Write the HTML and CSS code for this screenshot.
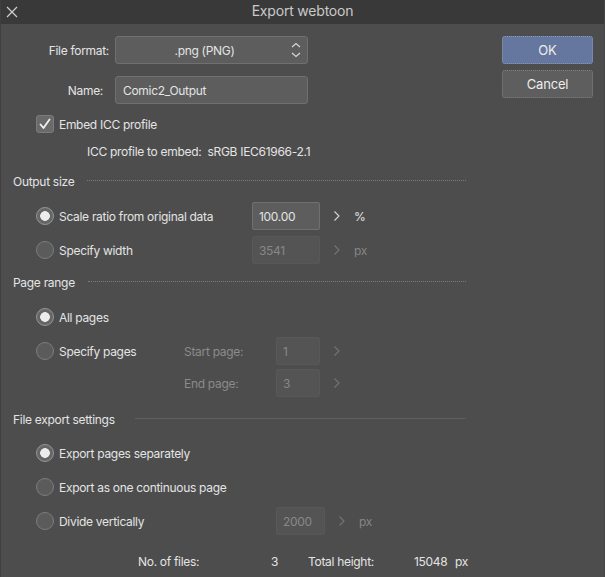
FILE: index.html
```html
<!DOCTYPE html>
<html lang="en">
<head>
<meta charset="utf-8">
<title>Export webtoon</title>
<link rel="stylesheet" href="styles.css">
</head>
<body>
<div class="window">
  <div class="titlebar">
    <svg class="close" width="12" height="12" viewBox="0 0 12 12"><path d="M1 1 L11 11 M11 1 L1 11" stroke="#cfcfcf" stroke-width="1.2" fill="none"/></svg>
    <div class="title">Export webtoon</div>
  </div>
  <div class="body">
    <div class="form">
      <div class="row field">
        <label class="flabel">File format:</label>
        <div class="select">.png (PNG)
          <svg class="updown" width="10" height="16" viewBox="0 0 10 16"><path d="M1 5 L5 1.5 L9 5 M1 11 L5 14.5 L9 11" stroke="#d8d8d8" stroke-width="1.1" fill="none"/></svg>
        </div>
      </div>
      <div class="row field name-row">
        <label class="flabel name">Name:</label>
        <div class="textbox">Comic2_Output</div>
      </div>
      <div class="row check-row">
        <span class="checkbox"><svg width="14" height="14" viewBox="0 0 14 14"><path d="M2.5 7.5 L5.5 11 L11.5 2.5" stroke="#f2f2f2" stroke-width="1.8" fill="none" stroke-linecap="round" stroke-linejoin="round"/></svg></span>
        <span>Embed ICC profile</span>
      </div>
      <div class="row icc-row">ICC profile to embed:&nbsp; sRGB IEC61966-2.1</div>

      <div class="section-head"><span>Output size</span><i class="rule dotted"></i></div>
      <div class="row opt">
        <span class="radio on"></span><span class="olabel">Scale ratio from original data</span>
        <div class="num w68">100.00</div>
        <svg class="chev" width="8" height="12" viewBox="0 0 8 12"><path d="M1.5 1.5 L6 6 L1.5 10.5" stroke="#d8d8d8" stroke-width="1.1" fill="none"/></svg>
        <span class="unit">%</span>
      </div>
      <div class="row opt">
        <span class="radio"></span><span class="olabel">Specify width</span>
        <div class="num w68 off">3541</div>
        <svg class="chev" width="8" height="12" viewBox="0 0 8 12"><path d="M1.5 1.5 L6 6 L1.5 10.5" stroke="#757575" stroke-width="1.1" fill="none"/></svg>
        <span class="unit off">px</span>
      </div>

      <div class="section-head pr"><span>Page range</span><i class="rule dotted"></i></div>
      <div class="row opt">
        <span class="radio on"></span><span class="olabel">All pages</span>
      </div>
      <div class="row opt">
        <span class="radio"></span><span class="olabel short">Specify pages</span>
        <span class="plabel">Start page:</span>
        <div class="num w44 off">1</div>
        <svg class="chev" width="8" height="12" viewBox="0 0 8 12"><path d="M1.5 1.5 L6 6 L1.5 10.5" stroke="#757575" stroke-width="1.1" fill="none"/></svg>
      </div>
      <div class="row opt tight">
        <span class="radio ghost"></span><span class="olabel short"></span>
        <span class="plabel">End page:</span>
        <div class="num w44 off">3</div>
        <svg class="chev" width="8" height="12" viewBox="0 0 8 12"><path d="M1.5 1.5 L6 6 L1.5 10.5" stroke="#757575" stroke-width="1.1" fill="none"/></svg>
      </div>

      <div class="section-head wide"><span>File export settings</span><i class="rule solid"></i></div>
      <div class="row opt">
        <span class="radio on"></span><span class="olabel">Export pages separately</span>
      </div>
      <div class="row opt">
        <span class="radio"></span><span class="olabel">Export as one continuous page</span>
      </div>
      <div class="row opt">
        <span class="radio"></span><span class="olabel long">Divide vertically</span>
        <div class="num w49 off">2000</div>
        <svg class="chev" width="8" height="12" viewBox="0 0 8 12"><path d="M1.5 1.5 L6 6 L1.5 10.5" stroke="#757575" stroke-width="1.1" fill="none"/></svg>
        <span class="unit off">px</span>
      </div>
      <div class="row summary">
        <span class="s1">No. of files:</span><span class="s2">3</span><span class="s3">Total height:</span><span class="s4">15048</span><span class="s5">px</span>
      </div>
    </div>
    <div class="actions">
      <button class="btn ok">OK</button>
      <button class="btn cancel">Cancel</button>
    </div>
  </div>
</div>
</body>
</html>
```

FILE: styles.css
```css
html, body {
  margin: 0;
  padding: 0;
  background: #4d4d4d;
}
body {
  font-family: "Inter", "Liberation Sans", sans-serif;
  font-size: 12px;
  letter-spacing: -0.3px;
  color: #e4e4e4;
}
.window {
  width: 605px;
  height: 577px;
  background: #4d4d4d;
  box-sizing: border-box;
  border-left: 1px solid #3f3f3f;
  border-right: 1px solid #454545;
  overflow: hidden;
}
.titlebar {
  height: 24px;
  box-sizing: border-box;
  padding-bottom: 3px;
  background: #393939;
  display: flex;
  align-items: center;
  justify-content: center;
  position: relative;
  margin-left: -1px;
  margin-right: -1px;
}
.close {
  position: absolute;
  left: 6px;
  top: 6px;
}
.title {
  font-size: 14px;
  color: #c9c9c9;
  letter-spacing: -0.2px;
}
.body {
  display: flex;
  padding-top: 12px;
}
.form {
  width: 465px;
  flex: none;
  display: flex;
  flex-direction: column;
  gap: 6px;
}
.row {
  height: 28px;
  display: flex;
  align-items: center;
}
.field {
  gap: 6px;
}
.flabel {
  width: 108px;
  text-align: right;
}
.flabel.name {
  padding-right: 6px;
  box-sizing: border-box;
}
.name-row { margin-top: 6px; }
.select, .textbox {
  width: 193px;
  height: 28px;
  box-sizing: border-box;
  border: 1px solid #707070;
  border-radius: 3px;
  background: #5d5d5d;
  display: flex;
  align-items: center;
  position: relative;
}
.select {
  justify-content: center;
  padding-right: 14px;
}
.textbox {
  padding-left: 7px;
}
.updown {
  position: absolute;
  right: 6px;
  top: 5px;
}
.check-row {
  height: 20px;
  padding-left: 35px;
  gap: 5px;
  margin-top: 4px;
}
.checkbox {
  width: 18px;
  height: 18px;
  box-sizing: border-box;
  border: 1px solid #7c7c7c;
  border-radius: 3px;
  background: #6a6a6a;
  display: flex;
  align-items: center;
  justify-content: center;
}
.icc-row {
  height: 20px;
  padding-left: 86px;
  margin-top: 1px;
}
.section-head {
  height: 20px;
  display: flex;
  align-items: center;
  gap: 13px;
  padding-left: 12px;
  margin-top: 4px;
}
.section-head.pr { margin-top: 2px; }
.section-head.wide { gap: 20px; margin-top: 6px; }
.section-head + .row { margin-top: 5px; }
.section-head.wide + .row { margin-top: 4px; }
.rule {
  flex: 1;
  height: 0;
  margin-top: -1px;
}
.rule.dotted { border-top: 1px dotted #7a7a7a; }
.rule.solid { border-top: 1px solid #5f5f5f; }
.opt {
  padding-left: 35px;
}
.opt.tight { margin-top: -2px; }
.radio {
  width: 18px;
  height: 18px;
  box-sizing: border-box;
  border-radius: 50%;
  border: 1px solid #7d7d7d;
  background: #5b5b5b;
  flex: none;
}
.radio.on {
  border: 1px solid #969696;
  background: radial-gradient(circle, #ececec 0 4.5px, #666 5.2px);
}
.radio.ghost { visibility: hidden; }
.olabel {
  margin-left: 5px;
  width: 193px;
  white-space: nowrap;
}
.olabel.short { width: 125px; }
.olabel.long { width: 217px; }
.plabel {
  width: 92px;
  color: #8b8b8b;
}
.num {
  height: 28px;
  box-sizing: border-box;
  border: 1px solid #707070;
  border-radius: 2px;
  background: #5d5d5d;
  display: flex;
  align-items: center;
  padding-left: 6px;
  flex: none;
}
.num.off {
  border: 1px dotted #5c5c5c;
  background-color: #4f4f4f;
  background-image: radial-gradient(circle, #5a5a5a 0.6px, transparent 0.8px);
  background-size: 2px 2px;
  color: #888;
}
.w68 { width: 68px; }
.w44 { width: 44px; }
.w49 { width: 49px; }
.chev {
  margin-left: 13px;
  flex: none;
}
.unit {
  margin-left: 13px;
}
.unit.off { color: #858585; }
.summary {
  height: 20px;
  margin-top: 10px;
}
.summary span { flex: none; white-space: nowrap; }
.s1 { margin-left: 137px; width: 133px; }
.s2 { width: 37px; }
.s3 { width: 106px; }
.s4 { width: 41px; }
.actions {
  margin-left: 36px;
  display: flex;
  flex-direction: column;
  gap: 6px;
}
.btn {
  width: 91px;
  height: 28px;
  border-radius: 3px;
  font-family: inherit;
  font-size: 13px;
  letter-spacing: -0.2px;
  color: #ededed;
  padding: 0;
}
.ok {
  background: #66779f;
  border: 1px dotted #8a97b8;
}
.cancel {
  background: #5e5e5e;
  border: 1px dotted #808080;
}
```
